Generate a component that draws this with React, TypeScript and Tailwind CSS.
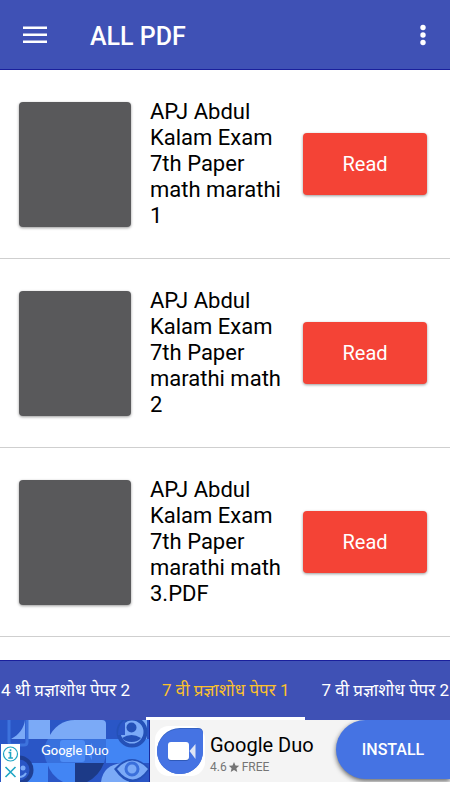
import { useState } from "react";

const FONT = "font-[Roboto,'Noto_Sans',sans-serif]";

const papers = [
  "APJ Abdul Kalam Exam 7th Paper math marathi 1",
  "APJ Abdul Kalam Exam 7th Paper marathi math 2",
  "APJ Abdul Kalam Exam 7th Paper marathi math 3.PDF",
];

const tabs = ["4 थी प्रज्ञाशोध पेपर 2", "7 वी प्रज्ञाशोध पेपर 1", "7 वी प्रज्ञाशोध पेपर 2"];

function Header() {
  return (
    <header className="flex h-[70px] shrink-0 items-center border-b border-[#1a1f9c] bg-[#3f51b5] px-[23px] text-white">
      <button type="button" aria-label="Open menu">
        <svg width="24" height="18" viewBox="0 0 24 18" fill="currentColor">
          <path d="M0 .5h24V3H0zM0 7.5h24V10H0zM0 14.5h24V17H0z" />
        </svg>
      </button>
      <h1 className="ml-[43px] flex-1 pt-1 text-[25px] leading-8 font-medium">ALL PDF</h1>
      <button type="button" aria-label="More options">
        <svg width="8" height="22" viewBox="0 0 8 22" fill="currentColor">
          <circle cx="4" cy="3.5" r="2.7" />
          <circle cx="4" cy="11" r="2.7" />
          <circle cx="4" cy="18.5" r="2.7" />
        </svg>
      </button>
    </header>
  );
}

function PaperRow({ title }: { title: string }) {
  return (
    <li className="flex h-[189px] items-center border-b border-[#cfcfcf] pr-[23px] pl-[19px]">
      <div className="h-[125px] w-28 shrink-0 rounded bg-[#59595b] shadow-[0_1px_3px_rgba(0,0,0,0.4)]" />
      <p className="mx-[19px] min-w-0 flex-1 text-[22px] leading-[26px] text-black">{title}</p>
      <button
        type="button"
        className="h-[62px] w-[124px] shrink-0 rounded bg-[#f44336] text-[20px] text-white shadow-[0_1px_3px_rgba(0,0,0,0.4)]"
      >
        Read
      </button>
    </li>
  );
}

function DuoArt() {
  return (
    <svg width="150" height="62" viewBox="0 0 150 62" aria-hidden="true">
      <path fill="#2a56c6" d="M0 0h150v62H0z" />
      <path fill="#7baaf7" d="M28 0h22v19H28z" />
      <path fill="#4285f4" d="M106 19h43v24h-43zM20 43h28v19H20z" />
      {/* phone outline */}
      <path fill="none" stroke="#3d73dd" strokeWidth="3" d="M9 0v22q0 3 3 3h12q3 0 3-3V0" />
      <path fill="#7baaf7" d="M25 0v19H11C19 15 24 8 25 0z" />
      {/* smiley behind the ad badge */}
      <circle cx="19" cy="50" r="12.5" fill="#2a56c6" stroke="#1f3f94" strokeWidth="4" />
      <circle cx="23" cy="48" r="2.5" fill="#7baaf7" />
      <path fill="none" stroke="#7baaf7" strokeWidth="2" d="M19 57q5 0 7-4" />
      {/* drop */}
      <path fill="#7baaf7" d="M48 19C53 7 63 0 75 0h27q4 0 4 4v15z" />
      <path fill="#3871de" d="M48 19h58v12q0 6-2 12H47C43 35 43 27 48 19z" />
      <path fill="#4285f4" d="M47 43h28v19H63Q51 56 47 43z" />
      <path fill="#1c3a87" d="M75 43h29Q99 56 87 62H75z" />
      <rect x="60" y="20" width="25" height="22" rx="3" fill="#4d8cf5" />
      <path fill="#4d8cf5" d="M86 31l6-8v17z" />
      {/* person */}
      <path fill="#7baaf7" d="M125 0h22v19h-22z" />
      <circle cx="132" cy="12" r="13.5" fill="#7baaf7" stroke="#2451b8" strokeWidth="4" />
      <path fill="#2a56c6" d="M125 0v15h-7C118 8 120 3 125 0z" />
      <circle cx="131.5" cy="7.5" r="5" fill="#2451b8" />
      <path fill="#2451b8" d="M122 18q9.500-6 19 0-3 4-9.500 4t-9.500-4z" />
      {/* eye */}
      <path fill="#7baaf7" d="M101 62q2-17 21-19l7 19z" />
      <path fill="#2451b8" d="M114 49q18-20 36 0-18 26-36 0z" />
      <path fill="#7baaf7" d="M117 49q15-17 31 0-15 21-31 0z" />
      <circle cx="132" cy="49" r="6" fill="#7baaf7" stroke="#3a6fdb" strokeWidth="3" />
      <path fill="#1a2a9c" d="M149 0h1v62h-1z" />
    </svg>
  );
}

function DuoIcon() {
  return (
    <svg width="50" height="50" viewBox="0 0 50 50" className="shrink-0" aria-hidden="true">
      <rect width="50" height="50" rx="14" fill="#fff" />
      <path fill="#3462c4" d="M25 2h18q5 0 5 5v18A23 23 0 1 1 25 2z" />
      <path fill="#4573e3" d="M25 3h18q5 0 5 5v17A23 22.5 0 1 1 25 3z" />
      <rect x="13" y="17" width="21" height="18" rx="3" fill="#2f59b8" />
      <rect x="13" y="16" width="21" height="18" rx="3" fill="#fff" />
      <path fill="#dfe6f5" d="M34.5 25l6-7v15z" />
    </svg>
  );
}

function AdBanner() {
  return (
    <aside className="flex h-[62px] shrink-0 overflow-hidden bg-[#f4f4f4]">
      <div className="relative w-[150px] shrink-0">
        <DuoArt />
        <span className="absolute inset-0 flex items-center justify-center gap-[2px] font-[Lato,sans-serif] text-[13px] text-white">
          <span className="font-medium">Google</span>
          <span>Duo</span>
        </span>
        <div className="absolute bottom-0 left-px flex w-[19px] flex-col items-center bg-white">
          <button type="button" aria-label="Ad information">
            <svg width="19" height="19" viewBox="0 0 19 19" fill="none" stroke="#1fa5c4">
              <circle cx="9.5" cy="10" r="7" strokeWidth="1.2" />
              <path strokeWidth="1.6" d="M7.5 8.5h2v5M7.3 14h4.6M9.500 5.2v1.8" />
            </svg>
          </button>
          <button type="button" aria-label="Close ad">
            <svg width="19" height="19" viewBox="0 0 19 19" fill="none" stroke="#1fa5c4">
              <path strokeWidth="1.6" d="M4.500 4l10 10M14.500 4l-10 10" />
            </svg>
          </button>
        </div>
      </div>
      <div className="flex min-w-0 flex-1 items-center gap-[5px] pl-[5px]">
        <DuoIcon />
        <div className="pt-2 whitespace-nowrap">
          <div className="text-[20px] leading-6 text-black">Google Duo</div>
          <div className="flex items-center gap-px text-[12px] leading-5 text-[#757575]">
            4.6
            <svg width="12" height="12" viewBox="0 0 24 24" fill="currentColor" aria-hidden="true">
              <path d="M12 2l3 7 7.500.7-5.700 5 1.700 7.300L12 18.200 5.500 22l1.700-7.300-5.700-5L9 9z" />
            </svg>
            <span className="pl-px">FREE</span>
          </div>
        </div>
      </div>
      <a
        href="#install"
        className="mb-[3px] flex w-[114px] shrink-0 items-center justify-center rounded-l-full bg-[#4573e3] text-[16px] font-medium text-white shadow-[0_2px_5px_rgba(0,0,0,0.6)]"
      >
        INSTALL
      </a>
    </aside>
  );
}

export default function App() {
  const [active, setActive] = useState(1);

  return (
    <div className={`flex h-screen flex-col bg-white pb-[18px] ${FONT}`}>
      <Header />
      <ul className="min-h-0 flex-1 overflow-hidden">
        {papers.map((title) => (
          <PaperRow key={title} title={title} />
        ))}
      </ul>
      <nav className="flex h-[60px] shrink-0 justify-center overflow-hidden border-t border-[#1a1f9c] bg-[#3f51b5]">
        {tabs.map((tab, i) => (
          <button
            key={tab}
            type="button"
            onClick={() => setActive(i)}
            className={`shrink-0 border-b-[3px] px-4 pt-1 text-[17px] whitespace-nowrap ${
              i === active ? "border-white text-[#fbc02d]" : "border-transparent text-white"
            }`}
          >
            {tab}
          </button>
        ))}
      </nav>
      <AdBanner />
    </div>
  );
}
